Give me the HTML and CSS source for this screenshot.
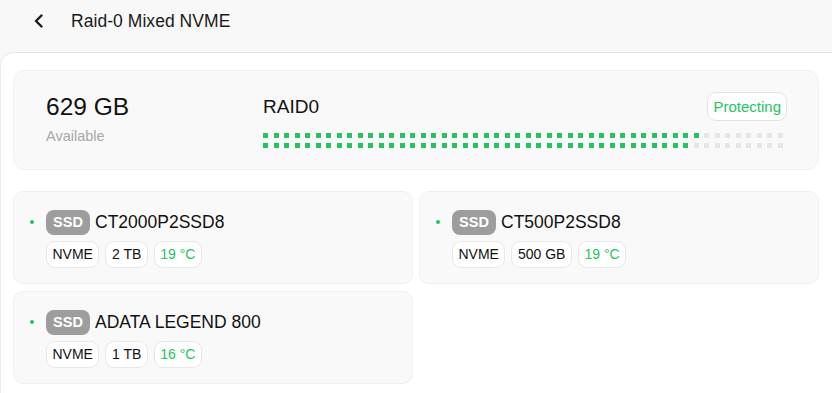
FILE: index.html
```html
<!DOCTYPE html>
<html lang="en">
<head>
<meta charset="utf-8">
<title>Raid-0 Mixed NVME</title>
<link rel="stylesheet" href="styles.css">
</head>
<body>
<div class="app">
  <header class="topbar">
    <button class="back" aria-label="Back">
      <svg width="12" height="14" viewBox="0 0 12 14"><path d="M8.5 1.5 L3 7 L8.5 12.5" fill="none" stroke="#1a1a1a" stroke-width="2.4" stroke-linecap="round" stroke-linejoin="round"/></svg>
    </button>
    <h1 class="title">Raid-0 Mixed NVME</h1>
  </header>
  <main class="panel">
    <section class="summary">
      <div class="capacity">
        <div class="cap-value">629 GB</div>
        <div class="cap-label">Available</div>
      </div>
      <div class="raid">
        <div class="raid-head">
          <span class="raid-name">RAID0</span>
          <span class="status">Protecting</span>
        </div>
        <div class="dots" id="row1"></div>
        <div class="dots" id="row2"></div>
      </div>
    </section>
    <section class="disks">
      <div class="disk">
        <div class="disk-head"><span class="led"></span><span class="ssd">SSD</span><span class="disk-name">CT2000P2SSD8</span></div>
        <div class="tags"><span class="tag">NVME</span><span class="tag">2 TB</span><span class="tag temp">19 °C</span></div>
      </div>
      <div class="disk">
        <div class="disk-head"><span class="led"></span><span class="ssd">SSD</span><span class="disk-name">CT500P2SSD8</span></div>
        <div class="tags"><span class="tag">NVME</span><span class="tag">500 GB</span><span class="tag temp">19 °C</span></div>
      </div>
      <div class="disk">
        <div class="disk-head"><span class="led"></span><span class="ssd">SSD</span><span class="disk-name">ADATA LEGEND 800</span></div>
        <div class="tags"><span class="tag">NVME</span><span class="tag">1 TB</span><span class="tag temp">16 °C</span></div>
      </div>
    </section>
  </main>
</div>
<script src="app.js"></script>
</body>
</html>
```
FILE: app.js
```js
function fill(id, green) {
  var row = document.getElementById(id);
  for (var i = 0; i < 50; i++) {
    var d = document.createElement('span');
    d.className = i < green ? 'dot on' : 'dot';
    row.appendChild(d);
  }
}
fill('row1', 42);
fill('row2', 41);
```
FILE: styles.css
```css
* { box-sizing: border-box; }
html, body { margin: 0; padding: 0; }
body {
  background: #f8f8f8;
  font-family: "Liberation Sans", Arial, sans-serif;
  color: #111;
  width: 832px;
  height: 393px;
  overflow: hidden;
}
.app { display: flex; flex-direction: column; }
.topbar {
  height: 52px;
  display: flex;
  align-items: center;
  padding: 0 0 0 31px;
  gap: 24px;
}
.back {
  border: 0;
  background: none;
  padding: 0;
  width: 16px;
  height: 16px;
  display: flex;
  align-items: center;
  justify-content: center;
  margin-top: -11px;
}
.title {
  margin: 0;
  font-size: 17.5px;
  font-weight: 400;
  color: #1a1a1a;
  margin-top: -10px;
  letter-spacing: 0.05px;
}
.panel {
  background: #fff;
  border-top: 1px solid #e6e6e6;
  border-left: 1px solid #ececec;
  border-top-left-radius: 14px;
  padding: 17px 13px 13px 12px;
  height: 341px;
}
.summary {
  height: 100px;
  background: #f9f9f9;
  border: 1px solid #f0f0f0;
  border-radius: 12px;
  display: flex;
  padding: 21px 31px 0 32px;
}
.capacity { width: 217px; }
.cap-value { font-size: 24.5px; line-height: 30px; color: #111; }
.cap-label { font-size: 14.5px; color: #a8a8a8; margin-top: 6px; }
.raid { flex: 1; display: flex; flex-direction: column; }
.raid-head { display: flex; justify-content: space-between; align-items: flex-start; height: 41px; }
.raid-name { font-size: 19px; line-height: 22px; margin-top: 4px; color: #111; }
.status {
  font-size: 15px;
  color: #22c55e;
  background: #fff;
  border: 1px solid #e3e3e3;
  border-radius: 9px;
  height: 29px;
  line-height: 27px;
  padding: 0 5px 0 5px;
}
.dots { display: flex; gap: 5.5px; height: 5px; margin-bottom: 5px; }
.dot { width: 5px; height: 5px; background: #e6e6e6; flex: none; }
.dot.on { background: #22c55e; }
.disks {
  display: grid;
  grid-template-columns: 400px 400px;
  column-gap: 6px;
  row-gap: 7px;
  margin-top: 21px;
}
.disk {
  height: 93px;
  background: #f9f9f9;
  border: 1px solid #f0f0f0;
  border-radius: 10px;
  padding: 17px 0 0 16px;
}
.disk-head { display: flex; align-items: center; height: 26px; }
.led { width: 4px; height: 4px; border-radius: 50%; background: #22c55e; margin-right: 12px; }
.ssd {
  background: #9d9d9d;
  color: #fff;
  font-weight: 700;
  font-size: 14.5px;
  height: 25px;
  line-height: 25px;
  width: 44px;
  text-align: center;
  border-radius: 8px;
  margin-right: 5px;
}
.disk-name { font-size: 17.5px; color: #111; }
.tags { display: flex; gap: 6px; margin-top: 6px; padding-left: 16px; }
.tag {
  height: 27px;
  line-height: 25px;
  font-size: 14px;
  color: #111;
  background: #fff;
  border: 1px solid #e8e8e8;
  border-radius: 9px;
  padding: 0 5.5px;
}
.tag.temp { color: #22c55e; }
```
